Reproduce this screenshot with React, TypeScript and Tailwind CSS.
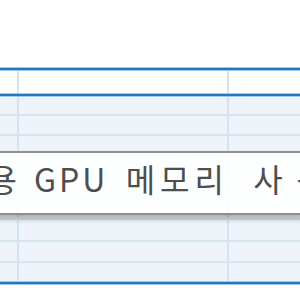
const rowHeights = [19, 20, 21, 21, 21, 21, 22, 21, 18];

function BlueRule() {
  return <div className="h-[4px] bg-[#2177c0] border-y border-[#a3c9ea]"></div>;
}

function Row({ h, last, header }: { h: number; last?: boolean; header?: boolean }) {
  return (
    <div
      className={`grid grid-cols-[17px_2px_208px_2px_1fr] ${header ? "bg-white" : "bg-[#eef3f9]"} ${last ? "" : "border-b-2 border-[#d6e5f2]"}`}
      style={{ height: h }}
    >
      <div></div>
      <div className="bg-[#d2e3f2]"></div>
      <div></div>
      <div className="bg-[#d2e3f2]"></div>
      <div></div>
    </div>
  );
}

export default function App() {
  return (
    <div className="relative w-[300px] h-[300px] overflow-hidden bg-white font-['Noto_Sans_CJK_KR',sans-serif]">
      <div className="h-[67px]"></div>
      <BlueRule />
      <Row h={22} header last />
      <BlueRule />
      {rowHeights.map((h, i) => (
        <Row key={i} h={h} last={i === rowHeights.length - 1} />
      ))}
      <BlueRule />

      {/* tooltip over the grid */}
      <div className="absolute left-[-4px] right-[-4px] top-[151px] h-[64px] border-y-2 border-[#8e8e8e] bg-white/90 shadow-[0_4px_5px_rgba(0,0,0,0.28)] flex items-center overflow-hidden">
        <span className="ml-[-40px] mt-[-10px] whitespace-nowrap text-[32px] leading-none text-[#4e4e4e] [word-spacing:8px]">
          <span className="tracking-[2px]">전용</span>{" "}
          <span className="tracking-[3px]">GPU</span>{" "}
          <span className="ml-[2px] tracking-[5px]">메모리</span>{" "}
          <span className="ml-[9px] tracking-[14px]">사용량</span>
        </span>
      </div>
    </div>
  );
}
